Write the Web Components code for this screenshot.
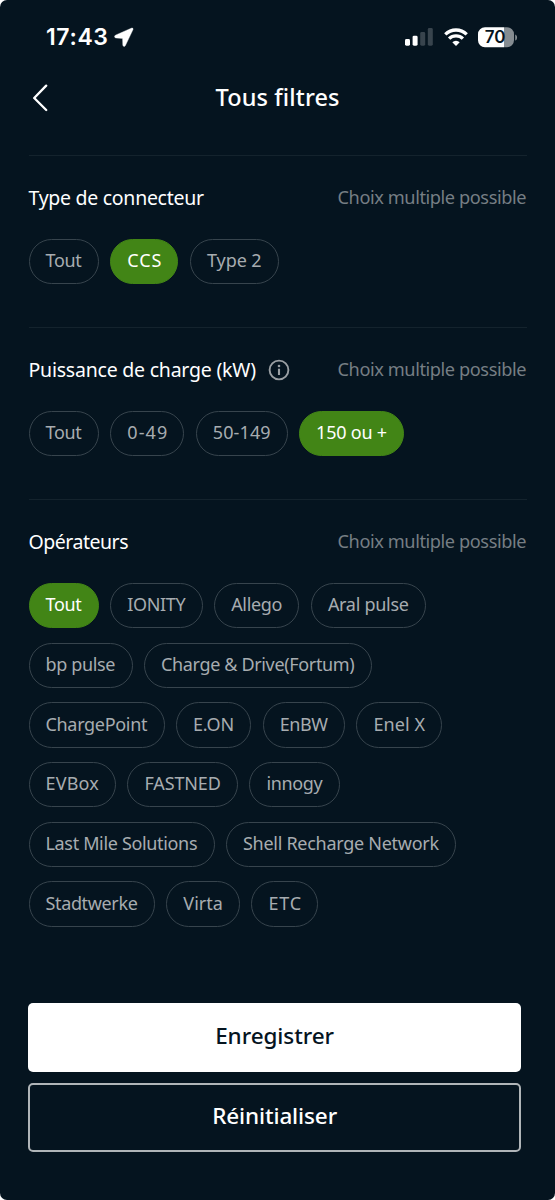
<!DOCTYPE html>
<html lang="fr">
<head>
<meta charset="utf-8">
<title>Tous filtres</title>
<style>
html,body{margin:0;background:#fff}
body{width:555px;height:1200px;overflow:hidden;font-family:"Noto Sans","Open Sans",sans-serif;color:#fff}
</style>
</head>
<body>
<filter-screen></filter-screen>
<script>
function define(name, html, setup) {
  const t = document.createElement('template');
  t.innerHTML = html.trim();
  customElements.define(name, class extends HTMLElement {
    connectedCallback() {
      if (this.shadowRoot) return;
      this.attachShadow({ mode: 'open' }).appendChild(t.content.cloneNode(true));
      if (setup) setup(this, this.shadowRoot);
    }
  });
}

// Tracks the text of a span so that it takes the given width.
function track(span, width, count) {
  const spacing = (width - span.getBoundingClientRect().width) / (count - 1);
  span.style.letterSpacing = spacing + 'px';
  span.style.marginRight = -spacing + 'px';
}

define('tracked-text', `
<style>:host{display:flex;white-space:nowrap}span{display:block}</style><span><slot></slot></span>`, (el, root) => {
  track(root.querySelector('span'), parseFloat(el.getAttribute('width')), [...el.textContent].length);
});

define('status-bar', `
<style>
:host{display:flex;align-items:center;height:74px;padding:0 37.5px 0 46px;box-sizing:border-box}
.time{font:600 23px/28px Inter,sans-serif;margin-right:6px}
.spacer{flex:1}
svg{display:block}
.wifi{margin:0 10px 0 11px}
.battery{position:relative;width:40px;height:21px}
.battery span{position:absolute;left:0;top:0;width:35px;text-align:center;font:600 17px/21px Inter,sans-serif;color:#05141f}
</style>
<tracked-text class="time" width="62">17:43</tracked-text>
<svg width="20" height="20" viewBox="0 0 20 20"><path d="M17.300 1.200 1.400 8.200c-1.300.7-1.100 2.500.4 2.700l6.800.5.200 6.700c.2 1.700 1.900 1.900 2.600.5L19 2.600c.5-1.100-.5-1.900-1.700-1.400z" fill="#fff" stroke="#fff" stroke-width=".4"/></svg>
<div class="spacer"></div>
<svg width="28" height="18" viewBox="0 0 28 18"><g fill="#fff"><rect y="11" width="5" height="6.700" rx="1.400"/><rect x="7.600" y="7.700" width="5" height="10" rx="1.400"/><g fill="#38444d"><rect x="15.200" y="4" width="5" height="13.700" rx="1.400"/><rect x="22.800" y="0" width="5" height="17.700" rx="1.400"/></g></g></svg>
<svg class="wifi" width="24" height="18" viewBox="0 0 24 18"><g fill="none" stroke="#fff" stroke-width="3.300"><path d="M1.300 6.400a15.200 15.200 0 0 1 21.400 0"/><path d="M5.100 10.700a9.800 9.800 0 0 1 13.800 0"/></g><path d="M12 17.900 8.300 14.200a5.300 5.300 0 0 1 7.400 0z" fill="#fff"/></svg>
<div class="battery">
<svg width="40" height="21" viewBox="0 0 40 21"><path d="M26 .2H29a7 7 0 0 1 7 7v6a7 7 0 0 1-7 7h-3z" fill="#858c91"/><path d="M26 .2H7a7 7 0 0 0-7 7v6a7 7 0 0 0 7 7h19z" fill="#fff"/><path d="M37.200 7.400c2.500.8 2.500 5.400 0 6.200z" fill="#858c91"/></svg>
<span>70</span></div>`);

define('screen-header', `
<style>
:host{display:grid;grid-template-columns:60px 1fr 60px;align-items:center;height:81px;padding-bottom:35px;box-sizing:border-box}
svg{display:block;margin:2px 0 0 31.500px}
.title{justify-self:center;font-size:23.500px;font-weight:500;line-height:32px}
</style>
<svg width="17" height="28" viewBox="0 0 17 28"><path d="M14.200 1.600 2.200 14l12 12" fill="none" stroke="#fff" stroke-width="2.300" stroke-linecap="round" stroke-linejoin="round"/></svg>
<tracked-text class="title" width="124">Tous filtres</tracked-text><i></i>`);

define('filter-chip', `
<style>
:host{display:flex;align-items:center;justify-content:center;box-sizing:border-box;height:45.300px;padding-bottom:3px;border:1px solid #37444d;border-radius:22.700px;color:#a7acb0;font-size:18px;line-height:24px;white-space:nowrap}
:host([selected]){background:#428516;border-color:#428516;color:#fff}
</style><span><slot></slot></span>`, (el, root) => {
  const w = parseFloat(el.getAttribute('width'));
  el.style.width = w + 'px';
  track(root.querySelector('span'), w - 34, [...el.textContent].length);
});

define('info-icon', `
<style>:host{display:block}svg{display:block}</style>
<svg width="22" height="22" viewBox="0 0 22 22"><circle cx="11" cy="11" r="9.400" fill="none" stroke="#9a9fa3" stroke-width="1.900"/><circle cx="11" cy="7" r="1.300" fill="#9a9fa3"/><path d="M11 9.700v6.300" stroke="#9a9fa3" stroke-width="2.100"/></svg>`);

define('filter-section', `
<style>
:host{display:block;box-sizing:border-box;min-height:172px;margin:0 28.500px;border-top:1px solid #14232d}
header{display:flex;align-items:center;height:83px;box-sizing:border-box;font-size:19.500px;line-height:28px}
.hint{margin-left:auto;padding-bottom:1px;font-size:18.200px;color:#767e84}
.chips{display:flex;flex-wrap:wrap;gap:14.400px 11.500px;margin-right:30px}
</style>
<header><slot name="title"></slot><tracked-text class="hint" width="189">Choix multiple possible</tracked-text></header>
<div class="chips"><slot></slot></div>`);

define('action-button', `
<style>
:host{display:flex;align-items:center;justify-content:center;box-sizing:border-box;height:68.500px;padding-bottom:2px;border-radius:5px;background:#fff;color:#05141f;font-size:22.500px;font-weight:500;line-height:30px}
:host([outline]){background:none;border:2px solid #b0b5b8;color:#fff}
</style><slot></slot>`);

define('filter-screen', `
<style>
:host{display:flex;flex-direction:column;width:555px;height:1200px;box-sizing:border-box;background:#05141f;border-radius:7px;overflow:hidden}
.label{display:flex;align-items:center;gap:12px}
info-icon{margin-top:1px}
footer{display:flex;flex-direction:column;gap:11.500px;margin:auto 34px 48.500px 28.300px}
</style>
<status-bar></status-bar>
<screen-header></screen-header>
<filter-section>
<div class="label" slot="title"><tracked-text width="175.500">Type de connecteur</tracked-text></div>
<filter-chip width="70.200">Tout</filter-chip><filter-chip width="68.300" selected>CCS</filter-chip><filter-chip width="88.700">Type 2</filter-chip>
</filter-section>
<filter-section>
<div class="label" slot="title"><tracked-text width="227.500">Puissance de charge (kW)</tracked-text><info-icon></info-icon></div>
<filter-chip width="70.200">Tout</filter-chip><filter-chip width="74.200">0-49</filter-chip><filter-chip width="91.700">50-149</filter-chip><filter-chip width="105" selected>150 ou +</filter-chip>
</filter-section>
<filter-section>
<div class="label" slot="title"><tracked-text width="100">Opérateurs</tracked-text></div>
<filter-chip width="70.200" selected>Tout</filter-chip><filter-chip width="92.500">IONITY</filter-chip><filter-chip width="85.200">Allego</filter-chip><filter-chip width="115">Aral pulse</filter-chip>
<filter-chip width="104">bp pulse</filter-chip><filter-chip width="227.700">Charge &amp; Drive(Fortum)</filter-chip>
<filter-chip width="136">ChargePoint</filter-chip><filter-chip width="75.200">E.ON</filter-chip><filter-chip width="82.300">EnBW</filter-chip><filter-chip width="85.500">Enel X</filter-chip>
<filter-chip width="87.400">EVBox</filter-chip><filter-chip width="110.500">FASTNED</filter-chip><filter-chip width="90.200">innogy</filter-chip>
<filter-chip width="186">Last Mile Solutions</filter-chip><filter-chip width="230">Shell Recharge Network</filter-chip>
<filter-chip width="126.300">Stadtwerke</filter-chip><filter-chip width="73.700">Virta</filter-chip><filter-chip width="66.700">ETC</filter-chip>
</filter-section>
<footer>
<action-button><tracked-text width="119">Enregistrer</tracked-text></action-button>
<action-button outline><tracked-text width="125">Réinitialiser</tracked-text></action-button>
</footer>`);
</script>
</body>
</html>
